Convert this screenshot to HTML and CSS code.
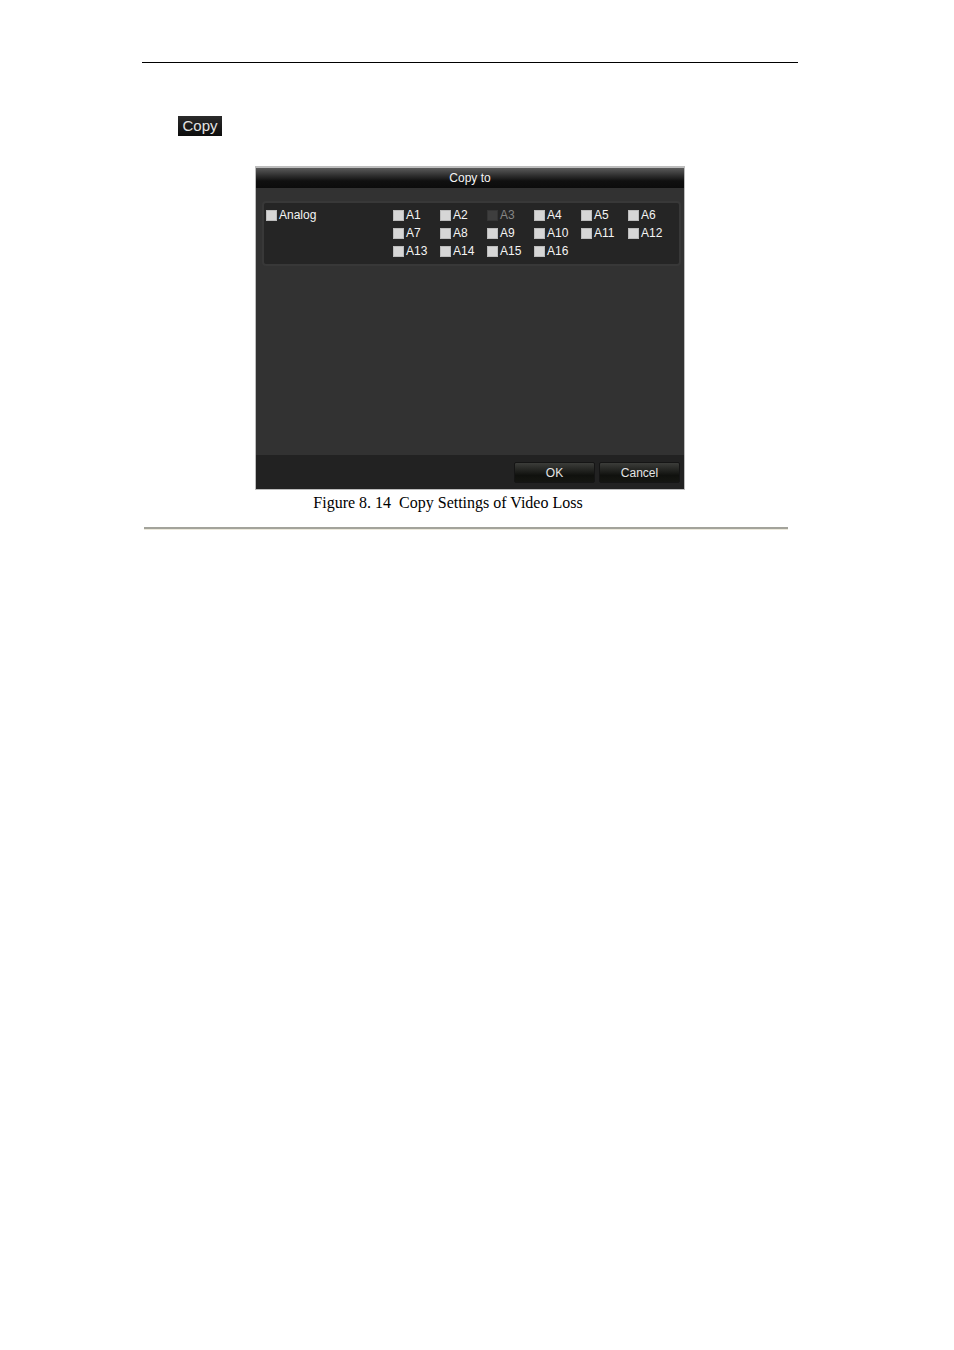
FILE: index.html
```html
<!DOCTYPE html>
<html lang="en">
<head>
  <meta charset="UTF-8" />
  <title>Copy Settings of Video Loss</title>
  <link rel="stylesheet" href="styles.css">
</head>
<body>

  <main class="page">
    <button type="button" class="copy-btn">Copy</button>

    <figure>
      <form class="dialog">
        <h1>Copy to</h1>
        <div class="dialog-body">
          <div class="channels">
            <label><input type="checkbox" />Analog</label>
            <div class="channel-grid">
              <label><input type="checkbox" />A1</label>
              <label><input type="checkbox" />A2</label>
              <label class="disabled"><input type="checkbox" disabled />A3</label>
              <label><input type="checkbox" />A4</label>
              <label><input type="checkbox" />A5</label>
              <label><input type="checkbox" />A6</label>
              <label><input type="checkbox" />A7</label>
              <label><input type="checkbox" />A8</label>
              <label><input type="checkbox" />A9</label>
              <label><input type="checkbox" />A10</label>
              <label><input type="checkbox" />A11</label>
              <label><input type="checkbox" />A12</label>
              <label><input type="checkbox" />A13</label>
              <label><input type="checkbox" />A14</label>
              <label><input type="checkbox" />A15</label>
              <label><input type="checkbox" />A16</label>
            </div>
          </div>
        </div>
        <div class="dialog-footer">
          <button type="button">OK</button>
          <button type="button">Cancel</button>
        </div>
      </form>
      <figcaption>Figure 8. 14&nbsp; Copy Settings of Video Loss</figcaption>
    </figure>

    <hr />
  </main>

</body>
</html>
```

FILE: styles.css
```css
* {
  box-sizing: border-box;
}
body {
  margin: 0;
  background-color: #fff;
  font-family: "Liberation Sans", Arial, sans-serif;
}
.page {
  margin: 62px 156px 0 142px;
  padding-top: 53px;
  border-top: 1px solid #000;
}
button {
  padding: 0;
  border: none;
  color: #e4e4e4;
  font-family: inherit;
  cursor: pointer;
}
.copy-btn {
  display: block;
  width: 44px;
  height: 20px;
  margin-left: 36px;
  background: linear-gradient(#2b2b2b, #0c0c0c);
  font-size: 15px;
  line-height: 20px;
}
figure {
  margin: 30px 0 0;
}
.dialog {
  max-width: 430px;
  margin: 0 auto;
  border: 1px solid #bdbdbd;
  border-top-width: 2px;
  background-color: #323232;
  color: #f4f4f4;
  font-size: 12px;
}
.dialog h1 {
  margin: 0;
  background: linear-gradient(#5a5a5a, #101010 65%, #0c0c0c);
  font-size: 12px;
  font-weight: normal;
  line-height: 20px;
  text-align: center;
}
.dialog-body {
  min-height: 267px;
  padding: 13px 3px 0 6px;
}
.channels {
  display: flex;
  justify-content: space-between;
  height: 65px;
  padding: 4px 4px 4px 2px;
  border: 2px solid #383838;
  border-radius: 4px;
  background-color: #252525;
}
.channel-grid {
  display: grid;
  grid-template-columns: repeat(6, 47px);
  grid-auto-rows: 18px;
}
label {
  display: flex;
  align-items: center;
  gap: 2px;
  height: 16px;
}
input[type="checkbox"] {
  appearance: none;
  width: 11px;
  height: 11px;
  margin: 0;
  border: 1px solid #bcbcbc;
  background-color: #d6d6d6;
}
input[type="checkbox"]:checked {
  background-color: #555;
}
.disabled {
  color: #858585;
}
.disabled input[type="checkbox"] {
  border-color: #353535;
  background-color: #3e3e3e;
}
.dialog-footer {
  display: flex;
  justify-content: flex-end;
  gap: 4px;
  height: 34px;
  padding: 7px 4px;
  background-color: #222;
}
.dialog-footer button {
  width: 81px;
  height: 21px;
  border: 1px solid #151515;
  border-radius: 2px;
  background: linear-gradient(#3c3d3a, #10110e 65%, #151612);
  font-size: 12px;
}
figcaption {
  margin-top: 3px;
  padding-right: 44px;
  color: #000;
  font-family: "Liberation Serif", "Times New Roman", serif;
  font-size: 16px;
  line-height: 20px;
  text-align: center;
}
hr {
  height: 3px;
  margin: 14px 10px 0 2px;
  border: none;
  border-bottom: 1px solid #ece9dc;
  background-color: #a3a39b;
}
```
